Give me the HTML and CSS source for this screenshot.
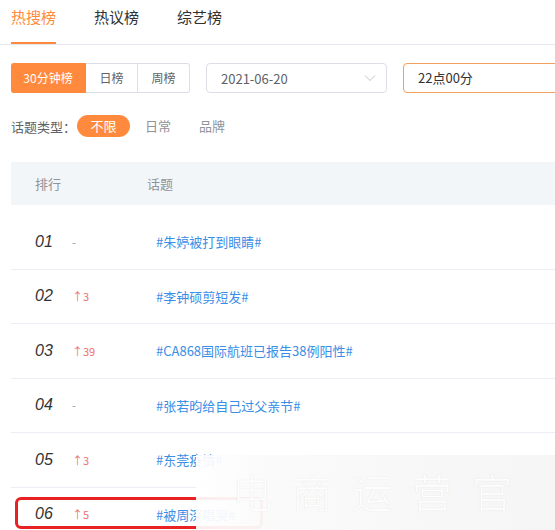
FILE: index.html
```html
<!DOCTYPE html>
<html lang="zh-CN">
<head>
<meta charset="utf-8">
<link rel="stylesheet" href="styles.css">
</head>
<body>
<div class="page">
  <nav class="tabs">
    <div class="tab active">热搜榜</div>
    <div class="tab">热议榜</div>
    <div class="tab">综艺榜</div>
  </nav>

  <div class="controls">
    <div class="btn-group">
      <div class="btn primary">30分钟榜</div>
      <div class="btn">日榜</div>
      <div class="btn">周榜</div>
    </div>
    <div class="select">
      <span>2021-06-20</span>
      <svg class="chev" width="12" height="8" viewBox="0 0 12 8"><path d="M1 1.5 L6 6.5 L11 1.5" fill="none" stroke="#c0c4cc" stroke-width="1"/></svg>
    </div>
    <div class="time-input">22点00分</div>
  </div>

  <div class="types">
    <span class="types-label">话题类型：</span>
    <span class="pill on">不限</span>
    <span class="pill daily">日常</span>
    <span class="pill brand">品牌</span>
  </div>

  <div class="table">
    <div class="thead">
      <div class="c-rank">排行</div>
      <div class="c-topic">话题</div>
    </div>
    <div class="tbody">
      <div class="row"><span class="rank">01</span><span class="chg flat">-</span><span class="topic">#朱婷被打到眼睛#</span></div>
      <div class="row"><span class="rank">02</span><span class="chg">↑3</span><span class="topic">#李钟硕剪短发#</span></div>
      <div class="row"><span class="rank">03</span><span class="chg">↑39</span><span class="topic">#CA868国际航班已报告38例阳性#</span></div>
      <div class="row"><span class="rank">04</span><span class="chg flat">-</span><span class="topic">#张若昀给自己过父亲节#</span></div>
      <div class="row"><span class="rank">05</span><span class="chg">↑3</span><span class="topic">#东莞疫情#</span></div>
      <div class="row marked"><span class="rank">06</span><span class="chg">↑5</span><span class="topic">#被周深唱哭#</span><span class="mark"></span></div>
    </div>
  </div>

  <div class="watermark">
    <div class="wm-text">电商运营官</div>
  </div>
</div>
</body>
</html>
```

FILE: styles.css
```css
* { box-sizing: border-box; }
html, body { margin: 0; padding: 0; background: #fff; overflow: hidden; }
body {
  width: 555px; height: 530px;
  font-family: "Noto Sans CJK SC", "Noto Sans", sans-serif;
  color: #606266;
}
.page { position: relative; width: 555px; height: 530px; overflow: hidden; }

.tabs {
  display: flex; gap: 38px;
  padding-left: 11px;
  border-bottom: 1px solid #e4e7ed;
  height: 45px;
}
.tab {
  font-size: 15px; line-height: 20px;
  padding-top: 7px;
  height: 44px;
  color: #303133;
}
.tab.active { color: #ff8a3d; border-bottom: 2px solid #ff8a3d; }

.controls {
  display: flex; align-items: center;
  margin-top: 18px; padding-left: 11px;
  height: 30px;
}
.btn-group { display: flex; height: 30px; flex-shrink: 0; }
.btn {
  width: 52px; height: 30px;
  border: 1px solid #dcdfe6; border-left: none;
  font-size: 12px; line-height: 28px; text-align: center;
  color: #606266;
}
.btn.primary {
  width: 75px; background: #ff8a3d; border-color: #ff8a3d;
  color: #fff; border-radius: 3px 0 0 3px;
}
.btn:last-child { border-radius: 0 3px 3px 0; }
.select {
  margin-left: 16px;
  width: 181px; flex-shrink: 0; height: 30px;
  border: 1px solid #dcdfe6; border-radius: 4px;
  display: flex; align-items: center; justify-content: space-between;
  padding: 0 10px 0 14px;
  font-size: 13px; color: #606266;
}
.time-input {
  margin-left: 16px;
  width: 200px; flex-shrink: 0; height: 30px;
  border: 1px solid #f0a060; border-radius: 4px;
  padding-left: 14px;
  font-size: 13px; line-height: 28px; color: #303133;
}

.types {
  display: flex; align-items: center;
  margin-top: 22px; padding-left: 11px;
  height: 22px;
  font-size: 13px;
}
.types-label { color: #606266; width: 66px; }
.pill {
  height: 22px; line-height: 22px;
  border-radius: 11px;
  color: #909399;
}
.pill.on { background: #ff8a3d; color: #fff; width: 53px; text-align: center; }
.pill.daily { margin-left: 15px; }
.pill.brand { margin-left: 28px; }

.table { margin-top: 25px; margin-left: 11px; }
.thead {
  display: flex; align-items: center;
  height: 43px; background: #f3f6f9;
  font-size: 13px; color: #909399;
}
.c-rank { width: 136px; padding-left: 24px; }
.tbody { margin-top: 10px; }
.row {
  position: relative;
  display: flex; align-items: center;
  height: 54.5px;
  border-bottom: 1px solid #ebeef5;
}
.rank {
  width: 61px; padding-left: 24px;
  font-family: "Liberation Sans", Arial, sans-serif;
  font-style: italic; font-size: 16px; color: #333;
}
.chg {
  width: 84px;
  font-size: 11px; color: #f07070;
}
.chg.flat { color: #999; }
.topic { font-size: 13px; color: #3a8ee6; }
.mark {
  position: absolute;
  left: 4px; top: 9px;
  width: 248px; height: 32px;
  border: 3px solid #e82222; border-radius: 6px;
}

.watermark {
  position: absolute; left: 196px; top: 455px;
  width: 359px; height: 75px;
  background: linear-gradient(to right, rgba(255,255,255,0.92), rgba(250,250,250,0.96) 20%, rgba(245,245,245,0.97));
}
.wm-text {
  position: absolute; left: 36px; top: 12px;
  font-size: 40px; letter-spacing: 20px;
  font-family: "Noto Sans CJK SC", sans-serif; font-weight: 300;
  color: rgba(255,255,255,0.98);
  text-shadow: 0 0 1px rgba(200,200,200,0.6);
  line-height: 48px;
}
```
